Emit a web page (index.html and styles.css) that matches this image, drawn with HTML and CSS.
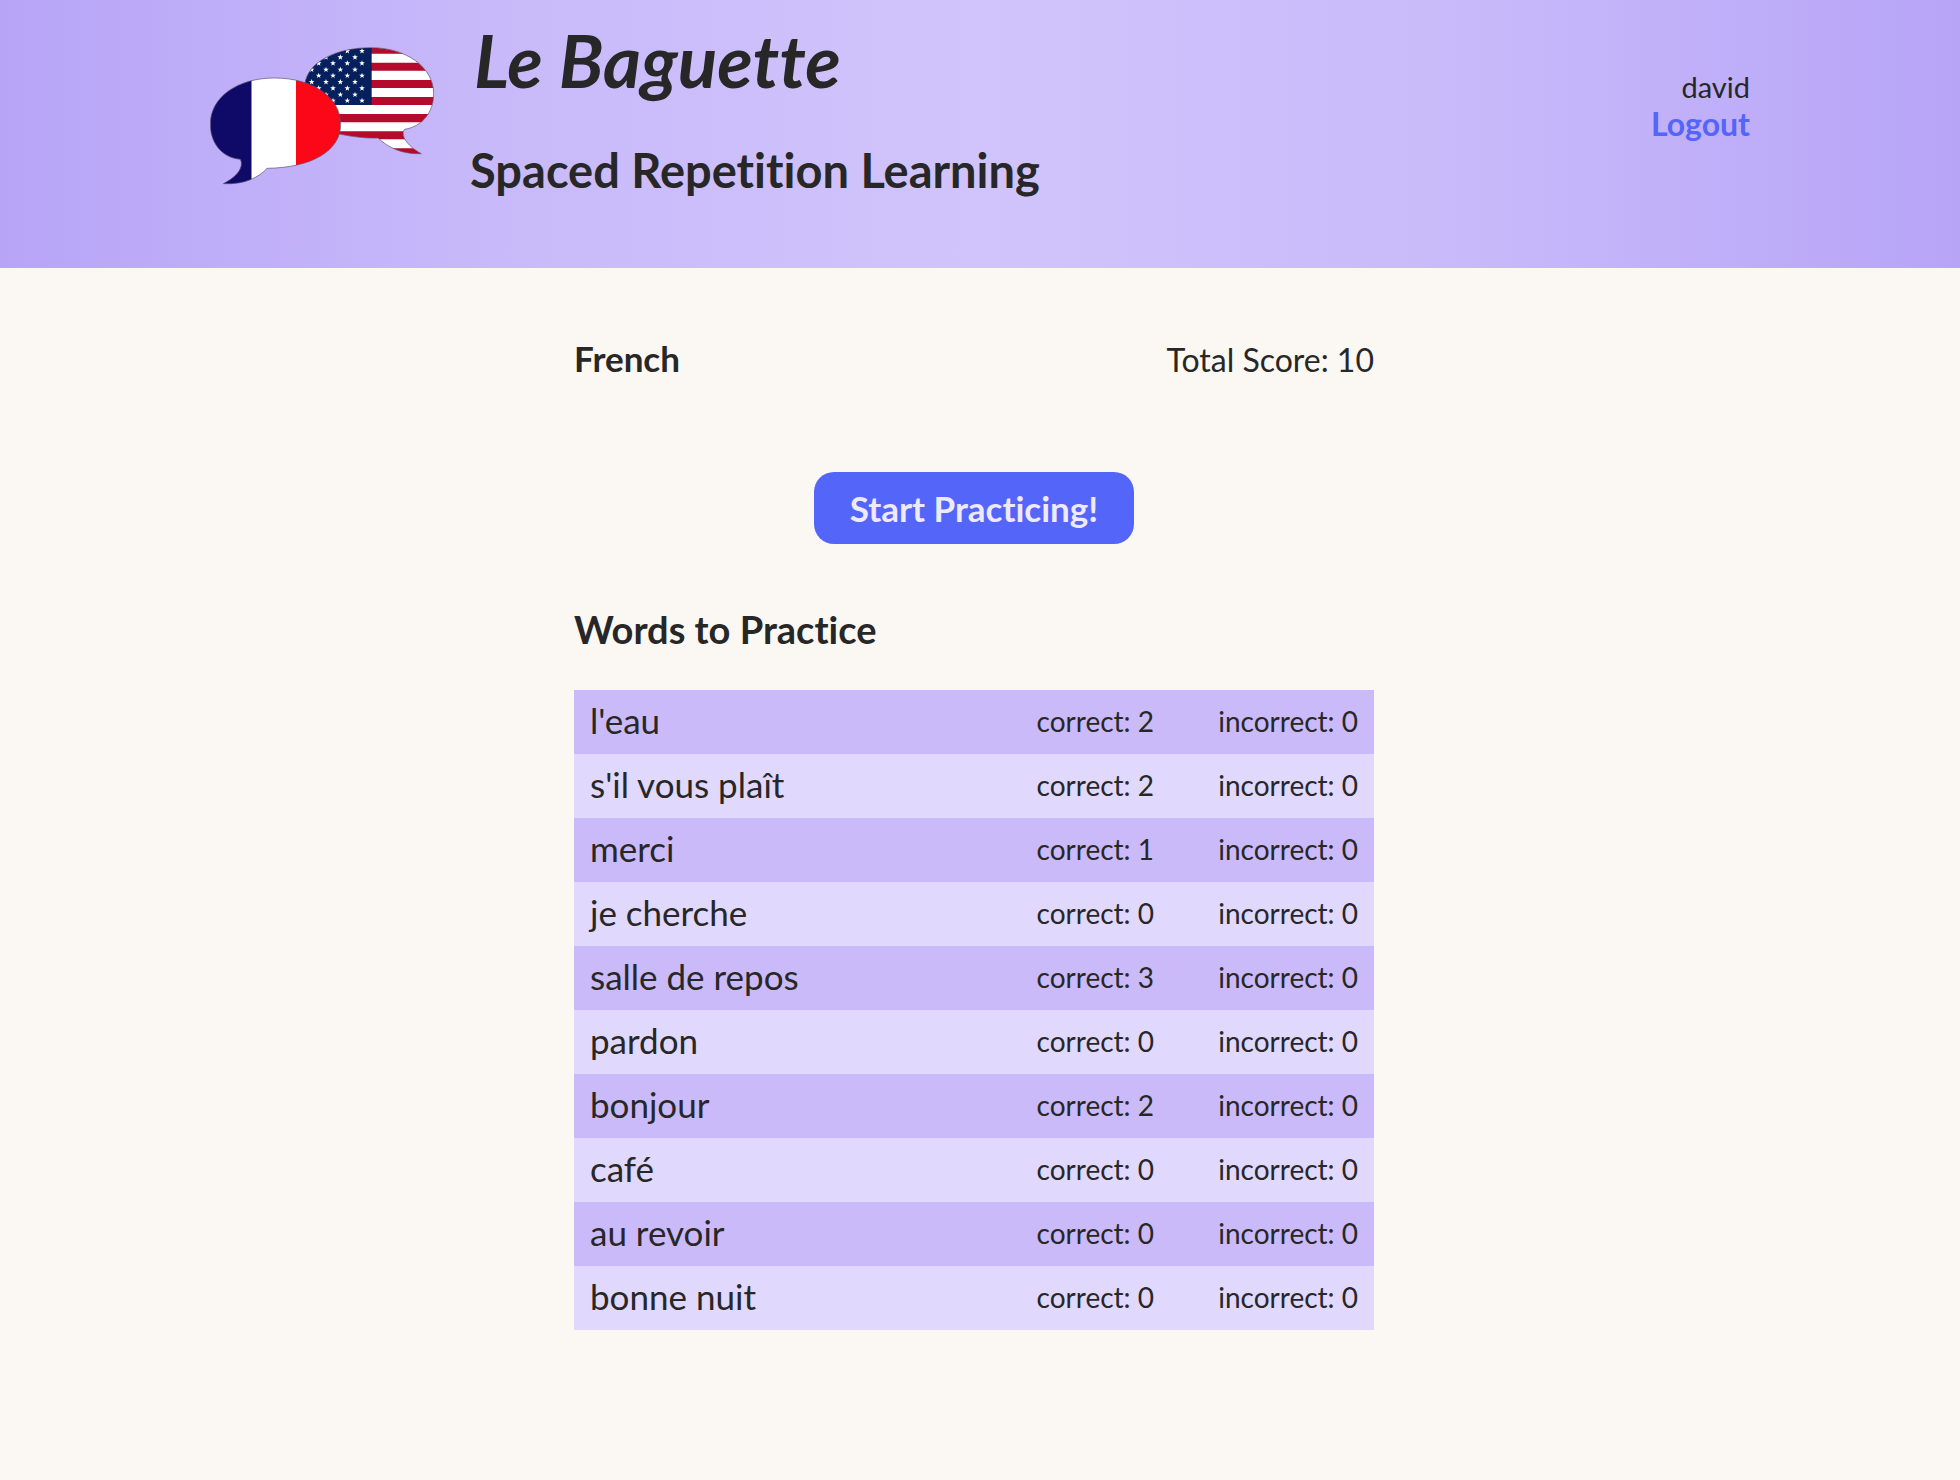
FILE: index.html
```
<!DOCTYPE html>
<html lang="en">
<head>
<meta charset="utf-8">
<title>Le Baguette</title>
<link rel="stylesheet" href="styles.css">
</head>
<body>
<header class="header">
  <div class="header-inner">
    <svg class="logo" viewBox="42 50 672 414" role="img" aria-label="French and American flags in speech bubbles">
      <defs>
        <clipPath id="us"><path id="us-shape" d="M525 52C630 52 713 110 713 190C713 245 680 288 626 297C612 312 630 345 676 370C620 373 577 352 546 323C500 324 465 318 430 311L327 160C335 95 420 52 525 52Z"/></clipPath>
        <clipPath id="fr"><path id="fr-shape" d="M235 143C350 143 434 200 434 282C434 360 350 412 213 414C190 440 145 464 82 460C125 438 144 410 133 387C75 382 43 335 43 282C43 200 125 143 235 143Z"/></clipPath>
        <path id="star" d="M0 -9L2.200 -3L8.500 -3L3.500 1L5.300 7.200L0 3.500L-5.300 7.200L-3.500 1L-8.500 -3L-2.200 -3Z"/>
        <g id="row-a"><use href="#star" x="498"/><use href="#star" x="454"/><use href="#star" x="411"/><use href="#star" x="368"/></g>
        <g id="row-b"><use href="#star" x="477"/><use href="#star" x="433"/><use href="#star" x="390"/><use href="#star" x="347"/></g>
      </defs>
      <g clip-path="url(#us)">
        <path fill="#fff" d="M320 45h400v335H320z"/>
        <path fill="#b50a2b" d="M320 45h400v25H320zM320 97h400v24H320zM320 149h400v24H320zM320 200h400v24H320zM320 251h400v25H320zM320 303h400v24H320zM320 354h400v24H320z"/>
        <path fill="#05205c" d="M320 45h207v179H320z"/>
        <g fill="#fff">
          <use href="#row-a" y="62"/><use href="#row-b" y="81"/><use href="#row-a" y="99"/><use href="#row-b" y="118"/><use href="#row-a" y="136"/><use href="#row-b" y="155"/><use href="#row-a" y="174"/><use href="#row-b" y="193"/><use href="#row-a" y="211"/>
        </g>
      </g>
      <use href="#us-shape" fill="none" stroke="#554f70" stroke-width="2"/>
      <g clip-path="url(#fr)">
        <path fill="#0f0a68" d="M40 140h127v325H40z"/>
        <path fill="#fff" d="M167 140h133v325H167z"/>
        <path fill="#fb0718" d="M300 140h136v325H300z"/>
      </g>
      <use href="#fr-shape" fill="none" stroke="#554f70" stroke-width="2"/>
    </svg>
    <div class="brand">
      <h1 class="brand-name">Le Baguette</h1>
      <h2 class="brand-tagline">Spaced Repetition Learning</h2>
    </div>
    <nav class="account">
      <span class="account-name">david</span>
      <a class="account-logout" href="#">Logout</a>
    </nav>
  </div>
</header>
<main class="main">
  <section class="dashboard">
    <div class="summary">
      <h2 class="language">French</h2>
      <p class="score">Total Score: 10</p>
    </div>
    <button class="start" type="button">Start Practicing!</button>
    <h3 class="words-title">Words to Practice</h3>
    <table class="words">
      <tbody>
        <tr><th scope="row">l'eau</th><td>correct: 2</td><td>incorrect: 0</td></tr>
        <tr><th scope="row">s'il vous plaît</th><td>correct: 2</td><td>incorrect: 0</td></tr>
        <tr><th scope="row">merci</th><td>correct: 1</td><td>incorrect: 0</td></tr>
        <tr><th scope="row">je cherche</th><td>correct: 0</td><td>incorrect: 0</td></tr>
        <tr><th scope="row">salle de repos</th><td>correct: 3</td><td>incorrect: 0</td></tr>
        <tr><th scope="row">pardon</th><td>correct: 0</td><td>incorrect: 0</td></tr>
        <tr><th scope="row">bonjour</th><td>correct: 2</td><td>incorrect: 0</td></tr>
        <tr><th scope="row">café</th><td>correct: 0</td><td>incorrect: 0</td></tr>
        <tr><th scope="row">au revoir</th><td>correct: 0</td><td>incorrect: 0</td></tr>
        <tr><th scope="row">bonne nuit</th><td>correct: 0</td><td>incorrect: 0</td></tr>
      </tbody>
    </table>
  </section>
</main>
</body>
</html>
```
FILE: styles.css
```
* {
  box-sizing: border-box;
}

body {
  margin: 0;
  background: #fbf8f3;
  color: #272727;
  font-family: Lato, sans-serif;
  font-size: 32px;
  font-variant-ligatures: none;
}

h1, h2, h3, p {
  margin: 0;
}

.header {
  padding: 20px 24px 68px;
  background: linear-gradient(to right, #b7a4f7, #c8b9fa, #d1c4fb, #c8b9fa, #b7a4f7);
}

.header-inner {
  display: flex;
  align-items: flex-start;
  max-width: 1540px;
  margin: 0 auto;
}

.logo {
  flex: none;
  width: 224px;
  height: 138px;
  margin: 27px 36px 0 0;
}

.brand-name {
  padding-left: 4px;
  font-size: 73px;
  font-style: italic;
  line-height: 80px;
}

.brand-tagline {
  margin-top: 40px;
  font-size: 47px;
  line-height: 60px;
}

.account {
  display: flex;
  flex-direction: column;
  align-items: flex-end;
  margin: 49px 0 0 auto;
}

.account-name {
  font-size: 29px;
  line-height: 36px;
}

.account-logout {
  color: #5465fa;
  font-weight: 700;
  line-height: 38px;
  text-decoration: none;
}

.main {
  padding: 68px 24px 150px 12px;
}

.dashboard {
  display: flex;
  flex-direction: column;
  max-width: 800px;
  margin: 0 auto;
}

.summary {
  display: flex;
  align-items: baseline;
  justify-content: space-between;
}

.language {
  font-size: 35px;
  line-height: 44px;
}

.score {
  line-height: 44px;
}

.start {
  align-self: center;
  width: 320px;
  height: 72px;
  margin: 90px 0 61px;
  padding: 0;
  border: 0;
  border-radius: 20px;
  background: #5465fa;
  color: #efe9fd;
  font: 700 35px/72px Lato, sans-serif;
  font-variant-ligatures: none;
}

.words-title {
  margin-bottom: 37px;
  font-size: 38px;
  line-height: 48px;
}

.words {
  width: 100%;
  border-collapse: collapse;
}

.words tr {
  height: 64px;
  background: #e0d8fd;
}

.words tr:nth-child(odd) {
  background: #cabaf9;
}

.words th {
  padding: 0 16px 4px;
  font-size: 35px;
  font-weight: 400;
  line-height: 60px;
  text-align: left;
}

.words td {
  width: 220px;
  padding: 0 0 2px;
  font-size: 28px;
  line-height: 60px;
  text-align: right;
}

.words td:last-child {
  padding-right: 16px;
}
```
